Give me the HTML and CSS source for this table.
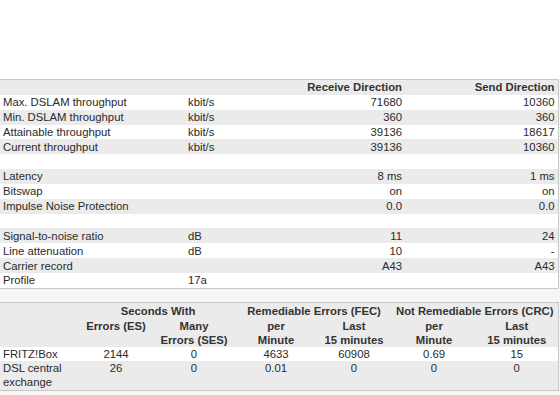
FILE: index.html
```html
<!DOCTYPE html>
<html>
<head>
<meta charset="utf-8">
<link rel="stylesheet" href="styles.css">
</head>
<body>
<div class="top-space"></div>
<div class="content">
<table class="line">
  <colgroup><col class="c-label"><col class="c-unit"><col class="c-rx"><col class="c-tx"></colgroup>
  <thead>
    <tr class="alt"><th></th><th></th><th class="num">Receive Direction</th><th class="num">Send Direction</th></tr>
  </thead>
  <tbody>
    <tr><td>Max. DSLAM throughput</td><td>kbit/s</td><td class="num">71680</td><td class="num">10360</td></tr>
    <tr class="alt"><td>Min. DSLAM throughput</td><td>kbit/s</td><td class="num">360</td><td class="num">360</td></tr>
    <tr><td>Attainable throughput</td><td>kbit/s</td><td class="num">39136</td><td class="num">18617</td></tr>
    <tr class="alt"><td>Current throughput</td><td>kbit/s</td><td class="num">39136</td><td class="num">10360</td></tr>
    <tr><td></td><td></td><td></td><td></td></tr>
    <tr class="alt"><td>Latency</td><td></td><td class="num">8 ms</td><td class="num">1 ms</td></tr>
    <tr><td>Bitswap</td><td></td><td class="num">on</td><td class="num">on</td></tr>
    <tr class="alt"><td>Impulse Noise Protection</td><td></td><td class="num">0.0</td><td class="num">0.0</td></tr>
    <tr><td></td><td></td><td></td><td></td></tr>
    <tr class="alt"><td>Signal-to-noise ratio</td><td>dB</td><td class="num">11</td><td class="num">24</td></tr>
    <tr><td>Line attenuation</td><td>dB</td><td class="num">10</td><td class="num">-</td></tr>
    <tr class="alt"><td>Carrier record</td><td></td><td class="num">A43</td><td class="num">A43</td></tr>
    <tr><td>Profile</td><td>17a</td><td></td><td></td></tr>
  </tbody>
</table>

<table class="errors">
  <colgroup><col class="e-label"><col class="e-es"><col class="e-ses"><col class="e-fpm"><col class="e-f15"><col class="e-cpm"><col class="e-c15"></colgroup>
  <thead>
    <tr><th></th><th colspan="2">Seconds With</th><th colspan="2">Remediable Errors (FEC)</th><th colspan="2">Not Remediable Errors (CRC)</th></tr>
    <tr><th></th><th>Errors (ES)</th><th>Many<br>Errors (SES)</th><th>per<br>Minute</th><th>Last<br>15 minutes</th><th>per<br>Minute</th><th>Last<br>15 minutes</th></tr>
  </thead>
  <tbody>
    <tr class="white"><td class="lbl">FRITZ!Box</td><td>2144</td><td>0</td><td>4633</td><td>60908</td><td>0.69</td><td>15</td></tr>
    <tr class="grey"><td class="lbl">DSL central exchange</td><td>26</td><td>0</td><td>0.01</td><td>0</td><td>0</td><td>0</td></tr>
  </tbody>
</table>
</div>
</body>
</html>
```

FILE: styles.css
```css
html, body {
  margin: 0;
  padding: 0;
  background: #ffffff;
}
body {
  font-family: "Liberation Sans", Arial, Helvetica, sans-serif;
  font-size: 11.3px;
  color: #2a2a2a;
  width: 560px;
  height: 395px;
  overflow: hidden;
}
.top-space {
  height: 79px;
  background: #ffffff;
}
.content {
  background: #f6f6f4;
  height: 316px;
}
table {
  border-collapse: collapse;
  table-layout: fixed;
  width: 558px;
  background: #ffffff;
}
.line {
  border-top: 1px solid #c9c9c9;
  border-right: 1px solid #c9c9c9;
  border-bottom: 1px solid #c9c9c9;
}
.c-label { width: 185px; }
.c-unit { width: 70px; }
.c-rx { width: 150px; }
.c-tx { width: 153px; }
.line th, .line td {
  height: 14.85px;
  line-height: 14px;
  padding: 0 3px;
  text-align: left;
  white-space: nowrap;
  vertical-align: middle;
}
.line th {
  font-weight: bold;
  color: #333;
}
.line .num { text-align: right; }
.line tr.alt { background: #ebebeb; }

.errors {
  margin-top: 13px;
  border-top: 1px solid #c9c9c9;
  border-right: 1px solid #c9c9c9;
  border-bottom: 1px solid #c9c9c9;
}
.e-label { width: 80px; }
.e-es { width: 72px; }
.e-ses { width: 84px; }
.e-fpm { width: 80px; }
.e-f15 { width: 76px; }
.e-cpm { width: 84px; }
.e-c15 { width: 82px; }
.errors thead { background: #ebebeb; }
.errors th {
  font-weight: bold;
  color: #333;
  line-height: 14px;
  padding: 1px 2px 0;
  text-align: center;
  vertical-align: top;
}
.errors td {
  line-height: 14px;
  padding: 0 2px;
  text-align: center;
  vertical-align: top;
}
.errors td.lbl {
  text-align: left;
  padding-left: 3px;
}
.errors tr.white { background: #ffffff; }
.errors tr.grey { background: #ebebeb; }
.errors tr.grey td { padding-bottom: 1px; }
```
